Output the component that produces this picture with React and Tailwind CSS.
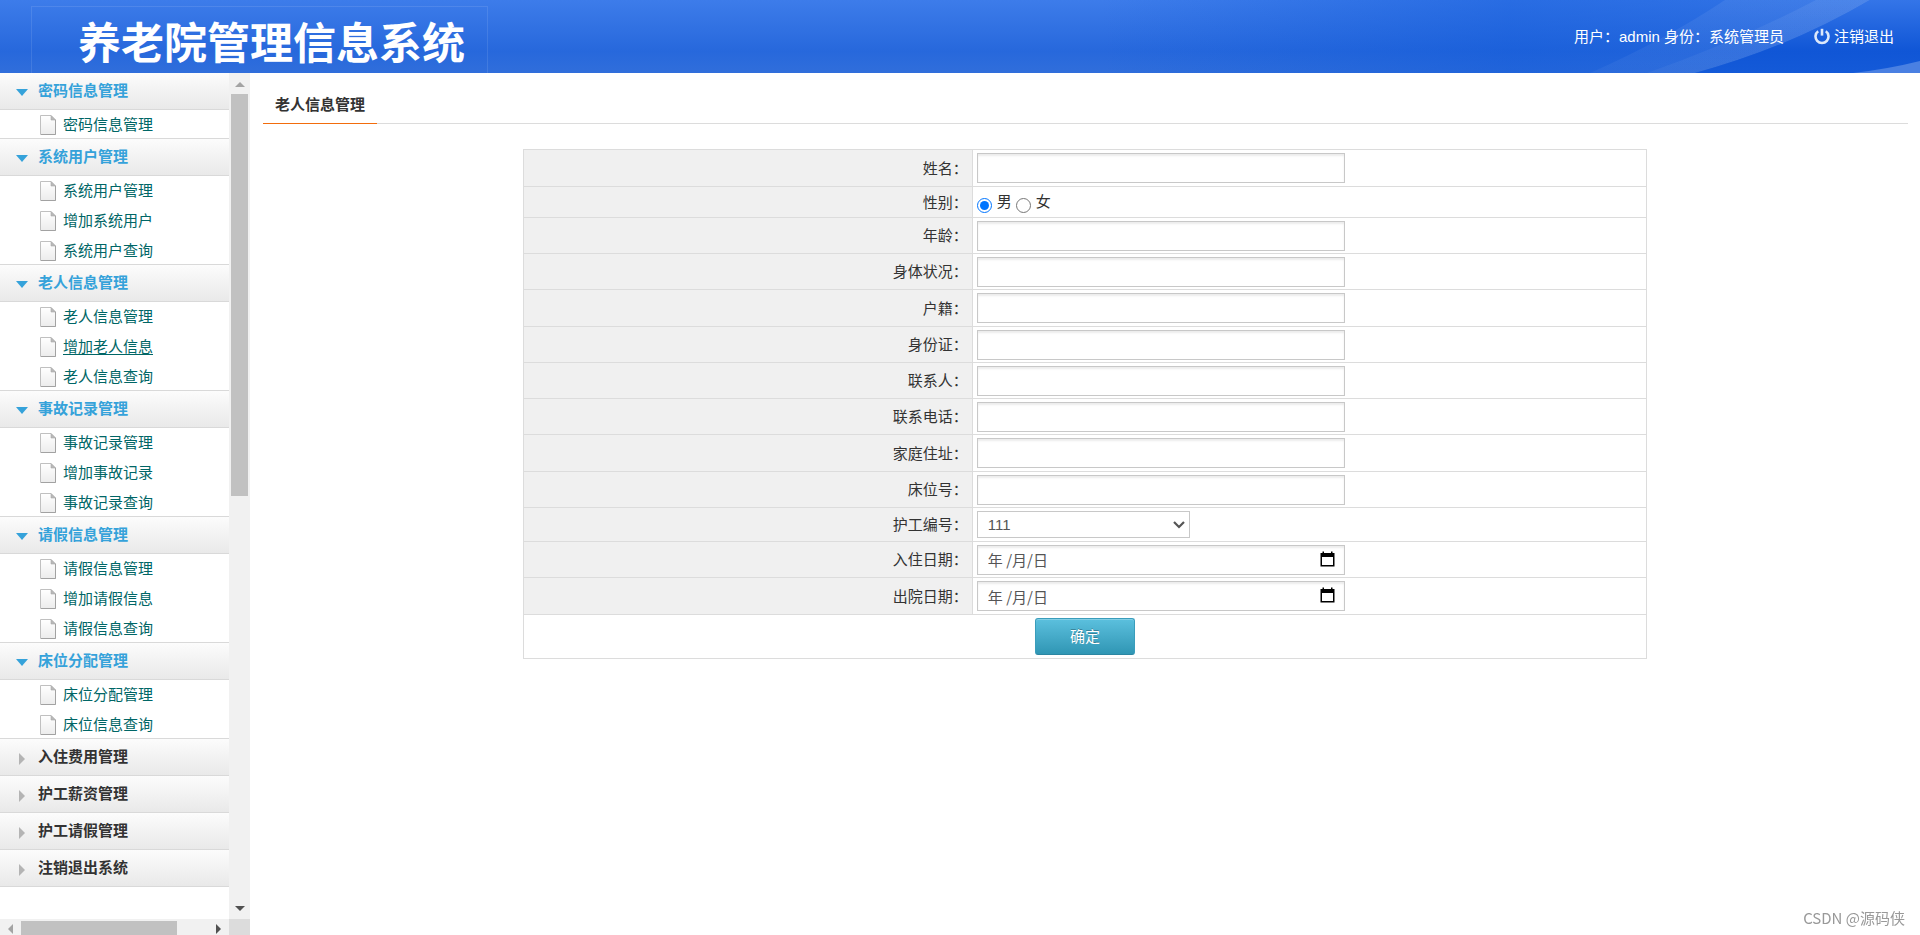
import { useState } from "react";

const MENU = [
  { title: "密码信息管理", items: ["密码信息管理"] },
  { title: "系统用户管理", items: ["系统用户管理", "增加系统用户", "系统用户查询"] },
  { title: "老人信息管理", items: ["老人信息管理", "增加老人信息", "老人信息查询"] },
  { title: "事故记录管理", items: ["事故记录管理", "增加事故记录", "事故记录查询"] },
  { title: "请假信息管理", items: ["请假信息管理", "增加请假信息", "请假信息查询"] },
  { title: "床位分配管理", items: ["床位分配管理", "床位信息查询"] },
  { title: "入住费用管理", items: [] },
  { title: "护工薪资管理", items: [] },
  { title: "护工请假管理", items: [] },
  { title: "注销退出系统", items: [] },
];

const FIELDS = [
  { id: "name", label: "姓名", type: "text" },
  { id: "sex", label: "性别", type: "radio" },
  { id: "age", label: "年龄", type: "text" },
  { id: "health", label: "身体状况", type: "text" },
  { id: "origin", label: "户籍", type: "text" },
  { id: "idcard", label: "身份证", type: "text" },
  { id: "contact", label: "联系人", type: "text" },
  { id: "phone", label: "联系电话", type: "text" },
  { id: "address", label: "家庭住址", type: "text" },
  { id: "bed", label: "床位号", type: "text" },
  { id: "nurse", label: "护工编号", type: "select" },
  { id: "checkin", label: "入住日期", type: "date" },
  { id: "checkout", label: "出院日期", type: "date" },
];

const inputClass =
  "block h-[30px] w-[368px] border border-[#c8c8c8] bg-white px-2.5 font-['Noto_Sans_CJK_SC',sans-serif] text-[15px] text-[#555] shadow-[inset_0_2px_2px_rgba(0,0,0,0.08)] outline-none placeholder:text-[#555]";

const PageIcon = () => (
  <svg width="16" height="20" viewBox="0 0 16 20" className="shrink-0">
    <defs>
      <linearGradient id="paper" x1="0" y1="0" x2="0" y2="1">
        <stop offset="0" stopColor="#ffffff" />
        <stop offset="1" stopColor="#ececec" />
      </linearGradient>
    </defs>
    <path d="M0.5 0.5H11L15.5 5V19.5H0.5Z" fill="url(#paper)" stroke="#c0c0c0" />
    <path d="M15.5 5V19.5H1" fill="none" stroke="#a2a2a2" />
    <path d="M11 0.5L15.5 5H11Z" fill="#b9b9b9" stroke="#a8a8a8" strokeWidth="0.6" />
  </svg>
);

const PowerIcon = () => (
  <svg width="16" height="17" viewBox="0 0 16 17" fill="none" stroke="#dce8fb" strokeWidth="2.6">
    <path d="M4.2 3.2A6.5 6.5 0 1 0 11.8 3.2" />
    <path d="M8 0.8V7.6" />
  </svg>
);

const CalendarIcon = () => (
  <svg width="15" height="16" viewBox="0 0 15 16">
    <path d="M2.5 0.5H4V2H11V0.5H12.5V2H14.5V15.5H0.5V2H2.5Z" fill="#000" />
    <rect x="2" y="6" width="11" height="8" fill="#fff" />
  </svg>
);

const Header = () => (
  <header className="relative flex h-[73px] shrink-0 items-stretch justify-between bg-gradient-to-b from-[#3d7cea] via-[#2768dc] via-70% to-[#306edb] text-[15px] text-white">
    <div className="absolute inset-y-0 right-0 w-[820px] bg-gradient-to-r from-transparent via-[#0a55d8]/40 to-[#0a55d8]/20" />
    <svg className="absolute right-0 top-0" width="520" height="73" viewBox="0 0 520 73">
      <defs>
        <linearGradient id="ray" x1="0" y1="0" x2="0" y2="1">
          <stop offset="0" stopColor="#ffffff" stopOpacity="0.07" />
          <stop offset="1" stopColor="#ffffff" stopOpacity="0.04" />
        </linearGradient>
        <linearGradient id="deep" x1="0" y1="0" x2="0" y2="1">
          <stop offset="0" stopColor="#3475e8" />
          <stop offset="0.7" stopColor="#1056d6" />
          <stop offset="1" stopColor="#145ad8" />
        </linearGradient>
      </defs>
      <path d="M190 73Q265 40 325 0H470Q390 47 295 73Z" fill="url(#ray)" />
      <path d="M247 73Q335 42 416 0H470Q390 47 295 73Z" fill="url(#ray)" />
      <path d="M295 73Q390 47 470 0H520V73Z" fill="url(#deep)" />
      <path d="M453 73Q488 69 520 61V73Z" fill="#4a80e2" />
    </svg>

    <div className="relative ml-[31px] mt-1.5 flex w-[457px] items-center border border-b-0 border-white/10 pl-[46px] pt-2">
      <h1 className="whitespace-nowrap text-[43px] font-bold leading-none">养老院管理信息系统</h1>
    </div>

    <div className="relative flex items-center gap-[30px] pr-[26px]">
      <span>用户：admin 身份：系统管理员</span>
      <a href="#logout" className="flex items-center gap-1">
        <PowerIcon />
        注销退出
      </a>
    </div>
  </header>
);

const MenuGroup = ({ group }) => {
  const [open, setOpen] = useState(group.items.length > 0);

  return (
    <li>
      <button
        type="button"
        onClick={() => setOpen(!open)}
        className={`flex h-[37px] w-full items-center border-b border-[#d9d9d9] bg-gradient-to-b from-[#fcfcfc] to-[#e9e9e9] pl-4 font-bold ${
          open ? "text-[#35a2da]" : "text-[#333]"
        }`}
      >
        <span className="flex w-[22px] items-center pt-[3px]">
          {open ? (
            <svg width="12" height="7" viewBox="0 0 12 7">
              <path d="M0 0H12L6 7Z" fill="#35a2da" />
            </svg>
          ) : (
            <svg width="10" height="12" viewBox="0 0 10 12">
              <path d="M3 0L9 6L3 12Z" fill="#b4b4b4" />
            </svg>
          )}
        </span>
        {group.title}
      </button>
      {open && (
        <ul className="border-b border-[#d9d9d9]">
          {group.items.map((item) => (
            <li key={item} className="flex h-[30px] items-start gap-[7px] pl-10 pt-[5px] last:h-7">
              <PageIcon />
              <a
                href="#item"
                className={`text-[#006666] underline-offset-2 hover:underline ${item === "增加老人信息" ? "underline" : ""}`}
              >
                {item}
              </a>
            </li>
          ))}
        </ul>
      )}
    </li>
  );
};

const Sidebar = () => (
  <aside className="flex w-[250px] shrink-0 flex-col">
    <div className="flex min-h-0 flex-1">
      <nav className="min-w-0 flex-1 overflow-hidden">
        <ul>
          {MENU.map((group) => (
            <MenuGroup key={group.title} group={group} />
          ))}
        </ul>
      </nav>
      {/* Vertical scrollbar */}
      <div className="flex w-[21px] flex-col items-center bg-[#f1f1f1]">
        <div className="flex h-[21px] items-center pt-0.5">
          <svg width="10" height="5" viewBox="0 0 10 5">
            <path d="M5 0L10 5H0Z" fill="#a3a3a3" />
          </svg>
        </div>
        <div className="min-h-0 flex-1">
          <div className="h-1/2 w-[17px] bg-[#c1c1c1]" />
        </div>
        <div className="flex h-[21px] items-center">
          <svg width="10" height="5" viewBox="0 0 10 5">
            <path d="M0 0H10L5 5Z" fill="#505050" />
          </svg>
        </div>
      </div>
    </div>
    {/* Horizontal scrollbar */}
    <div className="flex h-4 bg-[#f1f1f1]">
      <div className="flex w-[21px] items-center justify-center pt-1">
        <svg width="5" height="10" viewBox="0 0 5 10">
          <path d="M5 0V10L0 5Z" fill="#a3a3a3" />
        </svg>
      </div>
      <div className="flex-1 pt-0.5">
        <div className="h-full w-5/6 bg-[#c1c1c1]" />
      </div>
      <div className="flex w-[21px] items-center justify-center pt-1">
        <svg width="5" height="10" viewBox="0 0 5 10">
          <path d="M0 0L5 5L0 10Z" fill="#505050" />
        </svg>
      </div>
      <div className="w-[21px] bg-[#dcdcdc]" />
    </div>
  </aside>
);

const Field = ({ field }) => {
  if (field.type === "radio") {
    return (
      <div className="flex items-center">
        <input id="sex" type="radio" name="sex" defaultChecked className="mt-1.5 size-[15px]" />
        <label htmlFor="sex" className="ml-[5px] mr-1">男</label>
        <input id="sex-f" type="radio" name="sex" className="mt-1.5 size-[15px]" />
        <label htmlFor="sex-f" className="ml-[5px]">女</label>
      </div>
    );
  }

  if (field.type === "select") {
    return (
      <div className="relative w-[213px]">
        <select
          id={field.id}
          className="block h-[27px] w-full appearance-none border border-[#c8c8c8] bg-white px-2.5 text-[15px] leading-5 text-[#555] outline-none"
        >
          <option>111</option>
        </select>
        <svg className="pointer-events-none absolute right-[5px] top-2.5" width="12" height="8" viewBox="0 0 12 8">
          <path d="M1 1L6 6L11 1" fill="none" stroke="#555" strokeWidth="2.2" />
        </svg>
      </div>
    );
  }

  if (field.type === "date") {
    return (
      <div className="relative w-[368px]">
        <input id={field.id} type="text" placeholder="年 /月/日" className={inputClass} />
        <button type="button" aria-label="选择日期" className="absolute right-2.5 top-1.5">
          <CalendarIcon />
        </button>
      </div>
    );
  }

  return <input id={field.id} type="text" className={inputClass} />;
};

const ElderForm = () => (
  <form className="mx-5 mt-[25px]" onSubmit={(e) => e.preventDefault()}>
    <table className="mx-auto w-[70%] table-fixed border-separate border-spacing-0 border border-[#dcdcdc]">
      <colgroup>
        <col className="w-[40%]" />
        <col />
      </colgroup>
      <tbody>
        {FIELDS.map((field) => (
          <tr
            key={field.id}
            className={
              field.type === "radio" ? "h-[31px]" : field.type === "select" ? "h-[34px]" : "h-9 nth-[4n+1]:h-[37px]"
            }
          >
            <th className="border-b border-r border-[#dcdcdc] bg-[#f0f0f0] p-0 pr-1 pt-px text-right font-normal">
              <label htmlFor={field.id}>{field.label}：</label>
            </th>
            <td className="border-b border-[#dcdcdc] p-0 pl-1">
              <Field field={field} />
            </td>
          </tr>
        ))}
        <tr className="h-[43px]">
          <td colSpan={2} className="p-0">
            <button
              type="submit"
              className="mx-auto block h-[37px] w-[100px] rounded-[3px] border border-[#3a9dbb] border-b-[#2b86a2] bg-gradient-to-b from-[#5bc0de] to-[#2f96b4] text-white shadow-[inset_0_1px_0_rgba(255,255,255,0.25)] [text-shadow:0_-1px_0_rgba(0,0,0,0.25)]"
            >
              确定
            </button>
          </td>
        </tr>
      </tbody>
    </table>
  </form>
);

export default function App() {
  return (
    <div className="flex h-screen flex-col overflow-hidden bg-white font-['Liberation_Sans','Noto_Sans_CJK_SC',sans-serif] text-[15px] leading-5 text-[#333]">
      <Header />
      <div className="flex min-h-0 flex-1">
        <Sidebar />
        <main className="min-w-0 flex-1 px-3">
          <div className="ml-px flex border-b border-[#dcdcdc]">
            <h2 className="-mb-px border-b border-[#f26c0c] px-3 pb-2 pt-[22px] font-bold">老人信息管理</h2>
          </div>
          <ElderForm />
        </main>
      </div>
      <div className="fixed bottom-[7px] right-[15px] font-['Noto_Sans_CJK_SC',sans-serif] text-[#999]">CSDN @源码侠</div>
    </div>
  );
}
